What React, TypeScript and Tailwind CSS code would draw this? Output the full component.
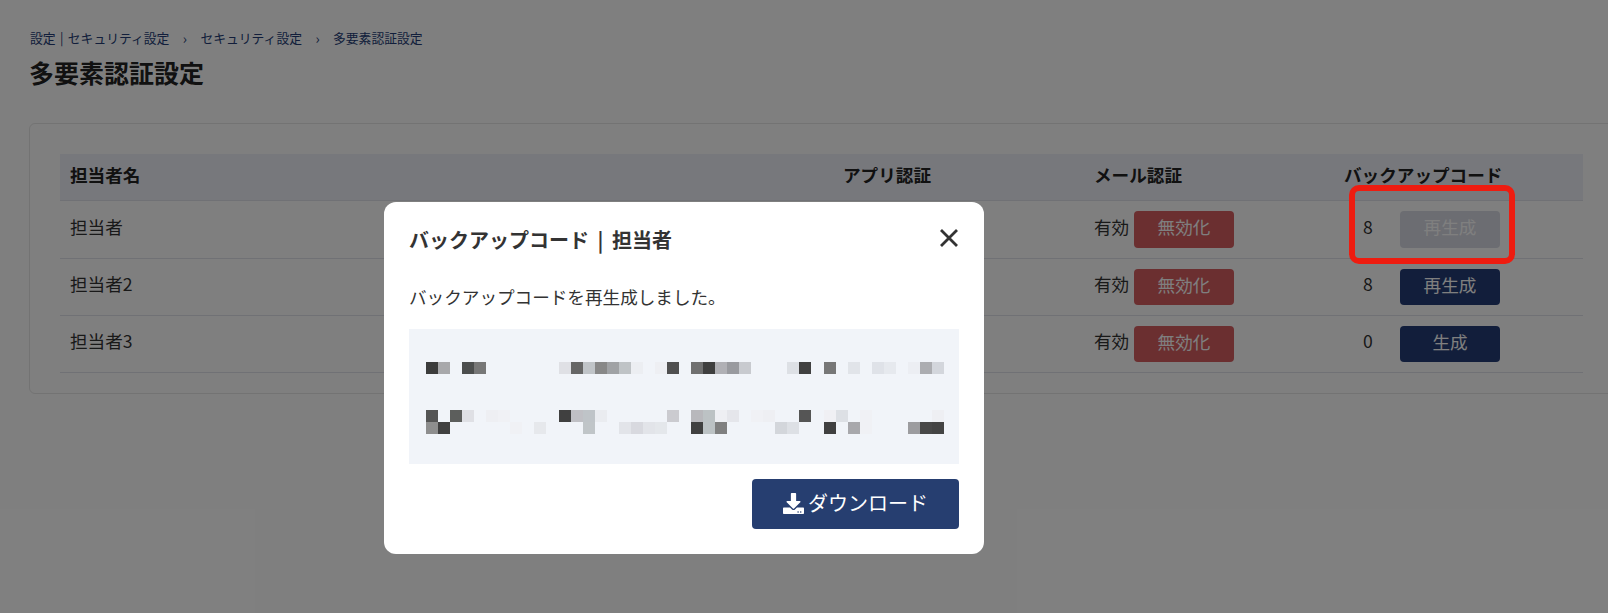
import { FaDownload } from "react-icons/fa";

type Row = { name: string; count: number; action: string; disabled?: boolean; h: string; btn: string };

const rows: Row[] = [
  { name: "担当者", count: 8, action: "再生成", disabled: true, h: "h-[58px]", btn: "h-[37px]" },
  { name: "担当者2", count: 8, action: "再生成", h: "h-[57px]", btn: "h-[36px]" },
  { name: "担当者3", count: 0, action: "生成", h: "h-[57px]", btn: "h-[36px]" },
];

// モザイク部分 [col, row, color] — 12px 格子
const mosaic: [number, number, string][] = [
  [0, 0, "#3c3c3c"], [1, 0, "#a8a8ab"], [3, 0, "#4c4e4e"], [4, 0, "#777777"], [11, 0, "#dfe0e5"], [12, 0, "#666666"],
  [13, 0, "#c0c4c8"], [14, 0, "#888888"], [15, 0, "#a0a2a5"], [16, 0, "#bfc3c6"], [17, 0, "#eceef2"], [19, 0, "#eeeff3"],
  [20, 0, "#505050"], [22, 0, "#707070"], [23, 0, "#3f3f3f"], [24, 0, "#b0b0b5"], [25, 0, "#999a9f"], [26, 0, "#c8cacf"],
  [30, 0, "#dde0e5"], [31, 0, "#404040"], [33, 0, "#777777"], [35, 0, "#e1e4e9"], [37, 0, "#dfe2e8"], [38, 0, "#e6e9ee"],
  [40, 0, "#eceef3"], [41, 0, "#acadb1"], [42, 0, "#d3d6dc"],
  [0, 4, "#555555"], [2, 4, "#5c5e5c"], [3, 4, "#dfe0e5"], [5, 4, "#eeeff3"], [6, 4, "#f0f1f5"], [11, 4, "#404040"],
  [12, 4, "#c0c0c5"], [13, 4, "#bfc4c8"], [14, 4, "#eaecf0"], [20, 4, "#cbcbd0"], [22, 4, "#b8b8bc"], [23, 4, "#bcc2c4"],
  [24, 4, "#eeeff3"], [25, 4, "#e5e6eb"], [27, 4, "#f0f1f5"], [28, 4, "#eeeff3"], [31, 4, "#555555"], [33, 4, "#f0f0f4"],
  [34, 4, "#dde0e5"], [36, 4, "#f0f1f5"], [42, 4, "#eeeff3"],
  [0, 5, "#8e8e8e"], [1, 5, "#404040"], [7, 5, "#f0f1f5"], [9, 5, "#e6e8ec"], [13, 5, "#c0c5c8"], [16, 5, "#e2e4e9"],
  [17, 5, "#d8d9df"], [18, 5, "#e2e4e9"], [19, 5, "#e4e7eb"], [22, 5, "#404040"], [23, 5, "#bcc2c4"], [24, 5, "#808080"],
  [29, 5, "#d3d6db"], [30, 5, "#dde0e5"], [33, 5, "#404040"], [35, 5, "#a8a8ac"], [36, 5, "#f0f1f5"], [40, 5, "#9c9c9f"],
  [41, 5, "#484848"], [42, 5, "#444444"],
];

const cols = "grid grid-cols-[773px_251px_250px_249px]";

function Page() {
  return (
    <div className="pt-[29px] pl-[29px]">
      <div className="flex items-center pl-px text-[12.8px] leading-[18px] text-[#243c76]">
        <span className="[word-spacing:1.5px]">設定 | セキュリティ設定</span>
        <span className="w-[31px] text-center text-[14px]">›</span>
        <span>セキュリティ設定</span>
        <span className="w-[31px] text-center text-[14px]">›</span>
        <span>多要素認証設定</span>
      </div>
      <h1 className="mt-[7px] text-[25px] leading-[36px] font-bold text-[#222]">多要素認証設定</h1>
      <div className="mt-[33px] h-[271px] w-[1620px] rounded-md border border-[#e6e6e6] pt-[30px] pl-[30px]">
        <div className="w-[1523px]">
          <div className={`${cols} h-[47px] items-center border-b border-[#e0e3ea] bg-[#eef1f8] pb-[3px] text-[17.6px] font-bold text-[#222]`}>
            <div className="pl-[10px]">担当者名</div>
            <div className="pl-[10px]">アプリ認証</div>
            <div className="pl-[10px]">メール認証</div>
            <div className="pl-[10px]">バックアップコード</div>
          </div>
          {rows.map((r) => (
            <div key={r.name} className={`${cols} ${r.h} items-center border-b border-[#e0e3ea] text-[17.6px] text-[#333]`}>
              <div className="pb-[5px] pl-[10px]">{r.name}</div>
              <div />
              <div className="flex items-center pl-[10px]">
                <span className="w-[40px] pb-[5px]">有効</span>
                <button className={`${r.btn} w-[100px] rounded bg-[#d65e60] pb-[4px] text-white`}>無効化</button>
              </div>
              <div className="flex items-center">
                <span className="w-[66px] pb-[5px] pl-[2px] text-center">{r.count}</span>
                <button className={`${r.btn} w-[100px] rounded pb-[4px] text-white ${r.disabled ? "bg-[#d8dae4]" : "bg-[#243c76]"}`}>
                  {r.action}
                </button>
              </div>
            </div>
          ))}
        </div>
      </div>
    </div>
  );
}

function Modal() {
  return (
    <div className="h-[352px] w-[600px] rounded-xl bg-white px-[25px] pt-[24px] text-[#333]">
      <div className="flex items-center justify-between">
        <h2 className="text-[20px] leading-[28px] font-bold [word-spacing:4px]">バックアップコード | 担当者</h2>
        <svg className="mt-[-5px] h-[20px] w-[20px]" viewBox="0 0 20 20" fill="none" stroke="#333" strokeWidth="2.8">
          <path d="M2 2 18 18M18 2 2 18" />
        </svg>
      </div>
      <p className="mt-[30px] text-[17.6px] leading-[26px]">バックアップコードを再生成しました。</p>
      <div className="mt-[19px] h-[135px] w-[550px] bg-[#f1f4f9] pt-[33px] pl-[17px]">
        <svg width="518" height="72" viewBox="0 0 516 72" preserveAspectRatio="none" shapeRendering="crispEdges">
          {mosaic.map(([c, r, fill]) => (
            <rect key={`${c}-${r}`} x={c * 12} y={r * 12} width="12" height="12" fill={fill} />
          ))}
        </svg>
      </div>
      <div className="mt-[15px] flex justify-end">
        <button className="flex h-[50px] w-[207px] items-center justify-center gap-[4px] rounded bg-[#263e70] pb-[2px] text-[20px] text-white">
          <FaDownload className="h-[21px] w-[21px]" />
          ダウンロード
        </button>
      </div>
    </div>
  );
}

export default function App() {
  return (
    <div className="relative h-[613px] w-[1608px] overflow-hidden bg-white font-['Noto_Sans_CJK_JP',sans-serif]">
      <Page />
      {/* モーダル背景 */}
      <div className="absolute inset-0 bg-black/50 pt-[202px] pl-[384px]">
        <Modal />
      </div>
      {/* 注釈の赤枠 */}
      <div className="absolute top-[185px] left-[1349px] h-[79px] w-[166px] rounded-[10px] border-[6px] border-[#ee1c10]" />
    </div>
  );
}
